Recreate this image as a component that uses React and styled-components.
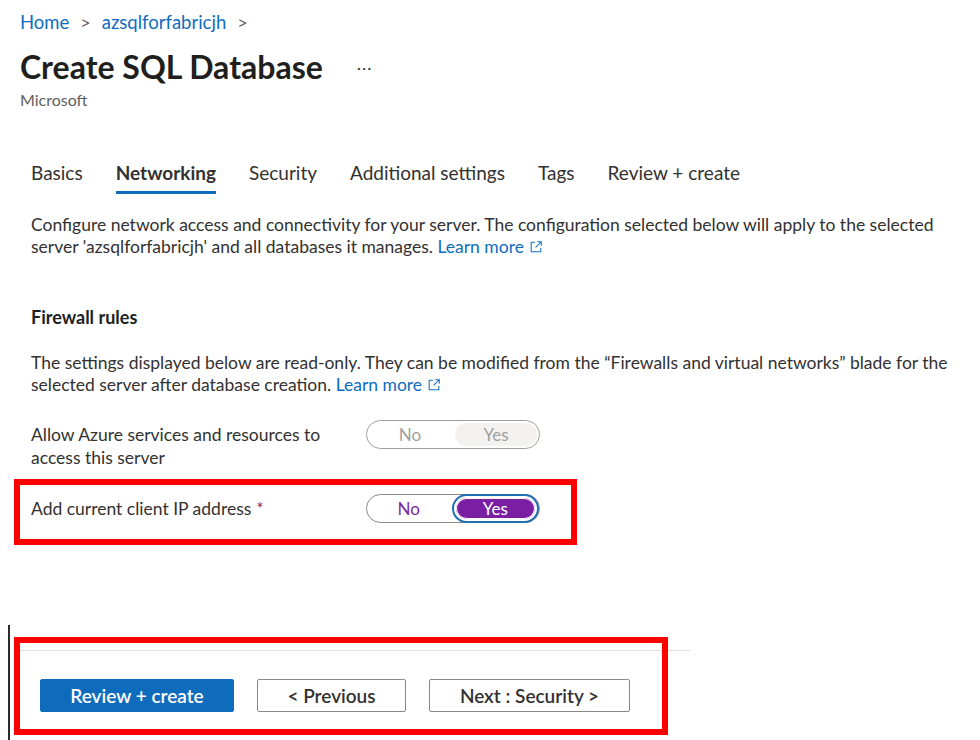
import React from 'react';
import styled, { createGlobalStyle } from 'styled-components';

const GlobalStyle = createGlobalStyle`
	html, body {
		margin: 0;
		padding: 0;
		background: #ffffff;
	}
	body {
		font-family: "Segoe UI", Lato, "Noto Sans", sans-serif;
		color: #323130;
		width: 980px;
		height: 740px;
		overflow: hidden;
	}
`

const Page = styled.div`
	display: flex;
	flex-direction: column;
	height: 740px;
`

const Header = styled.header`
	padding-left: 20px;
	padding-top: 10px;
`

const Breadcrumb = styled.nav`
	display: flex;
	align-items: center;
	gap: 11px;
	font-size: 18.5px;
	line-height: 24px;
	a {
		color: #0f6cbd;
		text-decoration: none;
	}
	span {
		color: #605e5c;
		font-size: 18px;
	}
`

const TitleRow = styled.div`
	display: flex;
	align-items: center;
	gap: 34px;
	margin-top: 13px;
	h1 {
		margin: 0;
		font-size: 32px;
		line-height: 40px;
		font-weight: 700;
		color: #201f1e;
	}
`

const MoreButton = styled.span`
	font-size: 18px;
	color: #323130;
	letter-spacing: 1px;
	padding-bottom: 8px;
`

const Publisher = styled.div`
	margin-top: 3px;
	font-size: 16px;
	line-height: 20px;
	color: #605e5c;
`

const Content = styled.main`
	padding-left: 31px;
`

const Tabs = styled.div`
	display: flex;
	gap: 33px;
	margin-top: 50px;
`

const Tab = styled.div`
	font-size: 19px;
	line-height: 26px;
	padding-bottom: 5px;
	color: #323130;
	font-weight: ${p => (p.$active ? 700 : 400)};
	border-bottom: 3px solid ${p => (p.$active ? '#0f6cbd' : 'transparent')};
`

const Paragraph = styled.p`
	margin: ${p => p.$top}px 0 0;
	font-size: 17.5px;
	line-height: 22px;
	color: #323130;
	white-space: nowrap;
`

const Link = styled.a`
	color: #0f6cbd;
	text-decoration: none;
	svg {
		margin-left: 5px;
		vertical-align: -1px;
	}
`

const SectionTitle = styled.h2`
	margin: 48px 0 0;
	font-size: 18px;
	line-height: 22px;
	font-weight: 700;
	color: #201f1e;
`

const FieldRow = styled.div`
	display: flex;
	align-items: ${p => (p.$center ? 'center' : 'flex-start')};
	margin-top: 24px;
`

const Label = styled.div`
	width: 335px;
	padding-top: ${p => (p.$center ? 0 : 3)}px;
	font-size: 17.5px;
	line-height: 23px;
	color: #323130;
	b {
		color: #a4262c;
		font-weight: 400;
		margin-left: 5px;
	}
`

const Highlight = styled.div`
	margin: 10px 0 0 -17px;
	width: 540px;
	border: 6px solid #ff0000;
	padding: 9px 0 16px 11px;
	${FieldRow} {
		margin-top: 0;
	}
`

const Toggle = styled.div`
	display: flex;
	width: 174px;
	height: 29px;
	box-sizing: border-box;
	border: 1px solid ${p => (p.$disabled ? '#a19f9d' : '#8a8886')};
	border-radius: 15px;
	padding: 2px;
	gap: 4px;
`

const Option = styled.div`
	flex: 1;
	display: flex;
	align-items: center;
	justify-content: center;
	border-radius: 12px;
	font-size: 17px;
	box-sizing: border-box;
	color: ${p => (p.$disabled ? '#a19f9d' : p.$on ? '#ffffff' : '#7b1fa2')};
	background: ${p => (p.$on ? (p.$disabled ? '#f3f2f1' : '#7b1fa2') : 'transparent')};
	box-shadow: ${p => (p.$on && !p.$disabled ? '0 0 0 1px #ffffff inset, 0 0 0 2px #ffffff, 0 0 0 4px #1f6fb5' : 'none')};
	${p => p.$on && !p.$disabled && 'margin: 1px 2px 1px 3px;'}
`

const Footer = styled.footer`
	position: relative;
	margin: 80px 0 0 8px;
	flex: 1;
	border-left: 2px solid #2b2b2b;
	padding: 25px 0 0 10px;
`

const ActionBar = styled.div`
	width: 670px;
	border-top: 1px solid #e1dfdd;
	display: flex;
	gap: 23px;
	padding: 28px 0 0 20px;
	box-sizing: border-box;
`

const Button = styled.button`
	height: 33px;
	width: ${p => p.$w}px;
	border-radius: 2px;
	font-family: inherit;
	font-size: 19px;
	font-weight: 600;
	cursor: pointer;
	border: 1px solid ${p => (p.$primary ? '#0f6cbd' : '#8a8886')};
	background: ${p => (p.$primary ? '#0f6cbd' : '#ffffff')};
	color: ${p => (p.$primary ? '#ffffff' : '#323130')};
`

const Annotation = styled.div`
	position: absolute;
	left: 4px;
	top: 12px;
	width: 654px;
	height: 98px;
	box-sizing: border-box;
	border: 6px solid #ff0000;
	pointer-events: none;
`

const ExternalIcon = () => (
	<svg width="14" height="14" viewBox="0 0 16 16" fill="none" stroke="#0f6cbd" strokeWidth="1.2">
		<path d="M7 2.5H3a.5.5 0 0 0-.5.5v10a.5.5 0 0 0 .5.5h10a.5.5 0 0 0 .5-.5V9" />
		<path d="M9.5 2h4.5v4.5M14 2L7.5 8.5" />
	</svg>
)

const tabs = ['Basics', 'Networking', 'Security', 'Additional settings', 'Tags', 'Review + create'];

const App = () => {
	return (
		<Page>
			<GlobalStyle />
			<Header>
				<Breadcrumb>
					<a href="#">Home</a>
					<span>&gt;</span>
					<a href="#">azsqlforfabricjh</a>
					<span>&gt;</span>
				</Breadcrumb>
				<TitleRow>
					<h1>Create SQL Database</h1>
					<MoreButton>...</MoreButton>
				</TitleRow>
				<Publisher>Microsoft</Publisher>
			</Header>
			<Content>
				<Tabs>
					{tabs.map(t => (
						<Tab key={t} $active={t === 'Networking'}>{t}</Tab>
					))}
				</Tabs>
				<Paragraph $top={20}>
					Configure network access and connectivity for your server. The configuration selected below will apply to the selected
					<br />
					server 'azsqlforfabricjh' and all databases it manages. <Link href="#">Learn more<ExternalIcon /></Link>
				</Paragraph>
				<SectionTitle>Firewall rules</SectionTitle>
				<Paragraph $top={24}>
					The settings displayed below are read-only. They can be modified from the “Firewalls and virtual networks” blade for the
					<br />
					selected server after database creation. <Link href="#">Learn more<ExternalIcon /></Link>
				</Paragraph>
				<FieldRow>
					<Label>Allow Azure services and resources to<br />access this server</Label>
					<Toggle $disabled>
						<Option $disabled>No</Option>
						<Option $disabled $on>Yes</Option>
					</Toggle>
				</FieldRow>
				<Highlight>
					<FieldRow $center>
						<Label $center>Add current client IP address<b>*</b></Label>
						<Toggle>
							<Option>No</Option>
							<Option $on>Yes</Option>
						</Toggle>
					</FieldRow>
				</Highlight>
			</Content>
			<Footer>
				<ActionBar>
					<Button $primary $w={194}>Review + create</Button>
					<Button $w={149}>&lt; Previous</Button>
					<Button $w={201}>Next : Security &gt;</Button>
				</ActionBar>
				<Annotation />
			</Footer>
		</Page>
	);
}

export default App;
